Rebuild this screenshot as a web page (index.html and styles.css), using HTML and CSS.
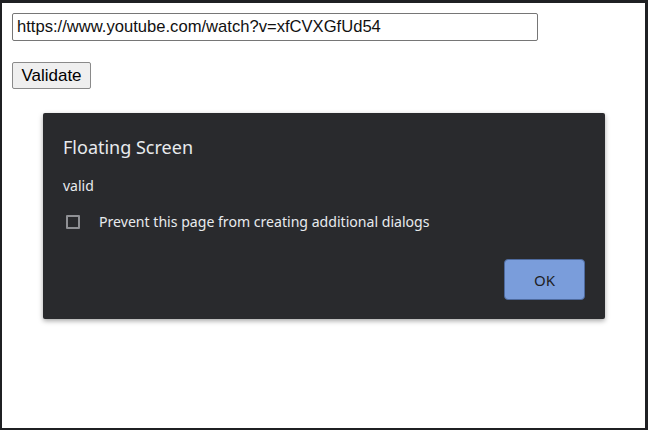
FILE: index.html
```html
<!DOCTYPE html>
<html>
<head>
<meta charset="utf-8">
<link rel="stylesheet" href="styles.css">
</head>
<body>
<div class="frame">
  <form class="form">
    <input class="url" type="text" value="https://www.youtube.com/watch?v=xfCVXGfUd54">
    <button class="validate" type="button">Validate</button>
  </form>
  <div class="dialog">
    <div class="title">Floating Screen</div>
    <div class="message">valid</div>
    <label class="prevent"><span class="box"></span><span>Prevent this page from creating additional dialogs</span></label>
    <div class="actions"><button class="ok" type="button">OK</button></div>
  </div>
</div>
</body>
</html>
```
FILE: styles.css
```css
html, body { margin: 0; padding: 0; background: #1b1c1e; }
.frame {
  box-sizing: border-box;
  width: 648px;
  height: 430px;
  background: #ffffff;
  border-style: solid;
  border-color: #1f2023;
  border-width: 3px 3px 2px 2px;
  position: relative;
}
.form {
  display: flex;
  flex-direction: column;
  align-items: flex-start;
  gap: 21px;
  padding: 10px 0 0 10px;
}
.url {
  box-sizing: border-box;
  width: 526px;
  height: 28px;
  border: 1px solid #767676;
  border-radius: 2px;
  padding: 0 4px;
  font-family: "Liberation Sans", Arial, sans-serif;
  font-size: 16.6px;
  color: #111;
}
.validate {
  box-sizing: border-box;
  width: 79px;
  height: 27px;
  border: 1px solid #8a8a8a;
  border-radius: 2px;
  background: #efefef;
  font-family: "Liberation Sans", Arial, sans-serif;
  font-size: 17px;
  color: #000;
  padding: 0;
}
.dialog {
  position: absolute;
  left: 41px;
  top: 110px;
  width: 562px;
  height: 206px;
  box-sizing: border-box;
  background: #292a2d;
  border-radius: 2px;
  box-shadow: 0 2px 5px rgba(0,0,0,0.35);
  padding: 22px 20px 19px 20px;
  display: flex;
  flex-direction: column;
  font-family: "Noto Sans", "Open Sans", sans-serif;
  color: #e8eaed;
}
.title { font-size: 18px; line-height: 24px; }
.message { font-size: 14px; line-height: 20px; margin-top: 17px; }
.prevent {
  display: flex;
  align-items: center;
  gap: 19px;
  margin-top: 16px;
  font-size: 14.1px;
  line-height: 20px;
  padding-left: 3px;
}
.box {
  box-sizing: border-box;
  width: 14px;
  height: 14px;
  border: 2px solid #8f9094;
  border-radius: 1px;
}
.actions { margin-top: auto; display: flex; justify-content: flex-end; }
.ok {
  box-sizing: border-box;
  width: 81px;
  height: 41px;
  background: #7a9ddb;
  border: 1px solid #4e6a9e;
  border-radius: 4px;
  font-family: "Noto Sans", "Open Sans", sans-serif;
  font-size: 15px;
  color: #202124;
  padding: 0;
}
```
